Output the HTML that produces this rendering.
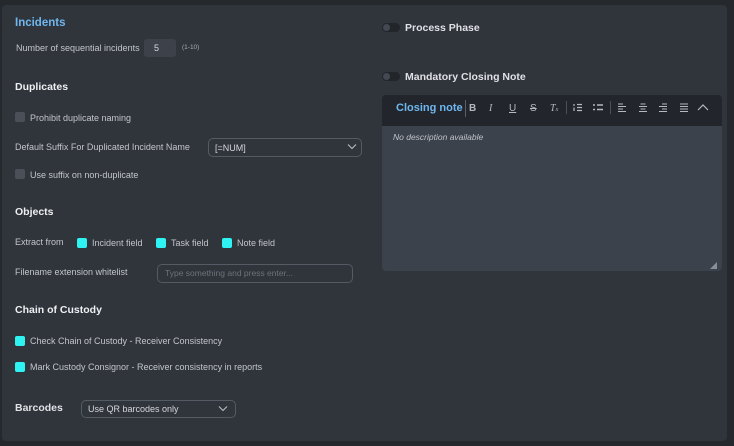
<!DOCTYPE html>
<html><head><meta charset="utf-8"><style>
*{box-sizing:border-box;margin:0;padding:0}
body{width:734px;height:446px;background:#25282d;font-family:"Liberation Sans",sans-serif;position:relative;overflow:hidden;color:#c9ccd2}
.panel{position:absolute;left:2px;top:5px;width:725px;height:436px;background:#30343b;border-radius:4px}
.a{position:absolute;white-space:nowrap}
.h{font-weight:bold;color:#eef0f3;font-size:10.5px}
.t{font-size:9px;color:#c3c6cc}
.cb{position:absolute;width:10px;height:10px;border-radius:2px;background:#4a4f58}
.cc{position:absolute;width:10px;height:10px;border-radius:2px;background:#2ff3f3}
.inp{position:absolute;border:1px solid #555b65;border-radius:5px}
.tog{position:absolute;width:18px;height:9px;border-radius:5px;background:#22252a}
.tog:after{content:"";position:absolute;left:1px;top:1px;width:7px;height:7px;border-radius:50%;background:#444951}
.ic{position:absolute;top:103px;font-size:10px;color:#b5b9c0}
</style></head><body>
<div class="panel"></div>
<div class="a h" style="left:15px;top:17px;color:#6fb7f0;font-size:11.5px">Incidents</div>
<div class="a t" style="left:16px;top:43px">Number of sequential incidents</div>
<div class="a" style="left:144px;top:39px;width:32px;height:18px;background:#3d424a;border-radius:3px;font-size:9px;color:#d6d8dc;padding:4px 0 0 10px">5</div>
<div class="a" style="left:182px;top:44px;font-size:6.5px;color:#a8acb3">(1-10)</div>

<div class="a h" style="left:15px;top:81px">Duplicates</div>
<div class="cb" style="left:15px;top:112px"></div>
<div class="a t" style="left:30px;top:113px">Prohibit duplicate naming</div>
<div class="a t" style="left:15px;top:142px">Default Suffix For Duplicated Incident Name</div>
<div class="inp" style="left:208px;top:138px;width:154px;height:19px"></div>
<div class="a t" style="left:215px;top:143px;color:#d6d8dc">[=NUM]</div>
<svg class="a" style="left:347px;top:143px" width="10" height="7"><path d="M1 1.5L5 5.5L9 1.5" stroke="#b9bdc4" fill="none" stroke-width="1.1"/></svg>
<div class="cb" style="left:15px;top:169px"></div>
<div class="a t" style="left:30px;top:170px">Use suffix on non-duplicate</div>

<div class="a h" style="left:15px;top:206px">Objects</div>
<div class="a t" style="left:15px;top:237px">Extract from</div>
<div class="cc" style="left:77px;top:238px"></div><div class="a t" style="left:92px;top:238px">Incident field</div>
<div class="cc" style="left:156px;top:238px"></div><div class="a t" style="left:171px;top:238px">Task field</div>
<div class="cc" style="left:222px;top:238px"></div><div class="a t" style="left:237px;top:238px">Note field</div>
<div class="a t" style="left:15px;top:267px">Filename extension whitelist</div>
<div class="inp" style="left:157px;top:264px;width:196px;height:19px"></div>
<div class="a" style="left:165px;top:268px;font-size:8.5px;color:#6d727b">Type something and press enter...</div>

<div class="a h" style="left:15px;top:304px">Chain of Custody</div>
<div class="cc" style="left:15px;top:336px"></div>
<div class="a t" style="left:30px;top:336px">Check Chain of Custody - Receiver Consistency</div>
<div class="cc" style="left:15px;top:362px"></div>
<div class="a t" style="left:30px;top:362px">Mark Custody Consignor - Receiver consistency in reports</div>

<div class="a h" style="left:15px;top:402px;color:#e0e2e6">Barcodes</div>
<div class="inp" style="left:81px;top:400px;width:155px;height:18px"></div>
<div class="a t" style="left:88px;top:404px;color:#d6d8dc">Use QR barcodes only</div>
<svg class="a" style="left:218px;top:405px" width="10" height="7"><path d="M1 1.5L5 5.5L9 1.5" stroke="#b9bdc4" fill="none" stroke-width="1.1"/></svg>

<div class="tog" style="left:382px;top:23px"></div>
<div class="a h" style="left:405px;top:22px;color:#dfe1e5">Process Phase</div>
<div class="tog" style="left:382px;top:72px"></div>
<div class="a h" style="left:405px;top:71px;color:#dfe1e5">Mandatory Closing Note</div>

<div class="a" style="left:382px;top:95px;width:340px;height:176px;background:#3c424b;border-radius:4px;overflow:hidden">
 <div style="height:31px;background:#22252b"></div>
</div>
<div class="a" style="left:396px;top:102px;font-size:11px;font-weight:bold;color:#6fb7f0">Closing note</div>
<div class="a" style="left:465px;top:100px;width:1px;height:17px;background:#5a5f68"></div>
<div class="ic" style="left:469px;font-weight:bold">B</div>
<div class="ic" style="left:489px;font-style:italic;font-family:'Liberation Serif',serif">I</div>
<div class="ic" style="left:509px;text-decoration:underline">U</div>
<div class="ic" style="left:530px;text-decoration:line-through">S</div>
<div class="ic" style="left:550px;font-style:italic;font-family:'Liberation Serif',serif">T<span style="font-size:6px">x</span></div>
<div class="a" style="left:566px;top:101px;width:1px;height:13px;background:#4a4f58"></div>
<svg class="a" style="left:573px;top:103px" width="10" height="9"><path d="M4 1.5H9M4 4.5H9M4 7.5H9M1 1V3M1 4.5V8" stroke="#b5b9c0" stroke-width="1.2"/></svg>
<svg class="a" style="left:593px;top:103px" width="10" height="9"><path d="M0 2H2M4 2H10M0 6.5H2M4 6.5H10" stroke="#b5b9c0" stroke-width="1.6"/></svg>
<div class="a" style="left:610px;top:101px;width:1px;height:13px;background:#4a4f58"></div>
<svg class="a" style="left:617px;top:103px" width="10" height="9"><path d="M1 1H6M1 3.5H9M1 6H6M1 8.5H9" stroke="#b5b9c0" stroke-width="1.1"/></svg>
<svg class="a" style="left:638px;top:103px" width="10" height="9"><path d="M2.5 1H7.5M1 3.5H9M2.5 6H7.5M1 8.5H9" stroke="#b5b9c0" stroke-width="1.1"/></svg>
<svg class="a" style="left:658px;top:103px" width="10" height="9"><path d="M4 1H9M1 3.5H9M4 6H9M1 8.5H9" stroke="#b5b9c0" stroke-width="1.1"/></svg>
<svg class="a" style="left:679px;top:103px" width="10" height="9"><path d="M1 1H9M1 3.5H9M1 6H9M1 8.5H9" stroke="#b5b9c0" stroke-width="1.1"/></svg>
<svg class="a" style="left:697px;top:103px" width="12" height="8"><path d="M1 7L6 2L11 7" stroke="#b5b9c0" fill="none" stroke-width="1.2"/></svg>
<div class="a" style="left:393px;top:132px;font-size:8.5px;font-style:italic;color:#c0c3c9">No description available</div>
<svg class="a" style="left:710px;top:262px" width="7" height="7"><path d="M7 0V7H0Z" fill="#8a8f97"/></svg>
</body></html>
